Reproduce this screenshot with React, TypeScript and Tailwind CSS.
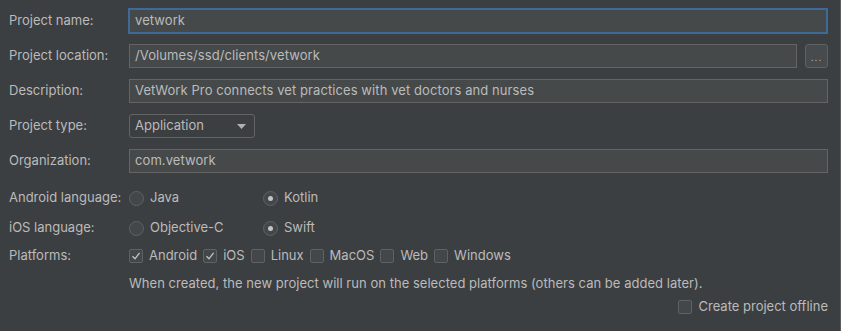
import React from 'react';

const font = { fontFamily: 'Inter, "Noto Sans", sans-serif' };

function Label({ children }: { children: React.ReactNode }) {
  return <div className="w-[120px] shrink-0 text-[13px] text-[#bbbbbb]">{children}</div>;
}

function Field({ value, focused }: { value: string; focused?: boolean }) {
  return (
    <div
      className={`flex flex-1 items-center bg-[#45494a] px-[5px] text-[13px] tracking-[0.08px] text-[#bbbbbb] ${
        focused ? 'h-[26px] border-2 border-[#3d6a97] -ml-[1px]' : 'h-[24px] border border-[#646464]'
      }`}
    >
      {value}
    </div>
  );
}

function Radio({ checked, label, width }: { checked?: boolean; label: string; width: string }) {
  return (
    <div className={`flex items-center ${width}`}>
      <span className="flex h-[15px] w-[15px] items-center justify-center rounded-full border border-[#5f6264] bg-[#43474a]">
        {checked && <span className="h-[5px] w-[5px] rounded-full bg-[#c4c4c4]" />}
      </span>
      <span className="ml-[6px] text-[13px] text-[#bbbbbb]">{label}</span>
    </div>
  );
}

function Check({ checked, label, last }: { checked?: boolean; label: string; last?: boolean }) {
  return (
    <div className={`flex items-center ${last ? '' : 'mr-[6px]'}`}>
      <span className="flex h-[14px] w-[14px] items-center justify-center rounded-[2px] border border-[#5f6264] bg-[#43474a]">
        {checked && (
          <svg width="10" height="10" viewBox="0 0 10 10">
            <path d="M1.5 5.2 L4 7.8 L8.6 1.8" fill="none" stroke="#c4c4c4" strokeWidth="1.3" />
          </svg>
        )}
      </span>
      <span className="ml-[6px] text-[13px] text-[#bbbbbb]">{label}</span>
    </div>
  );
}

export default function App() {
  return (
    <div className="h-[331px] w-[841px] border-r border-[#5b5e60] bg-[#3c3f41] pl-[9px] pr-[12px] pt-[8px]" style={font}>
      <div className="flex h-[26px] items-center">
        <Label>Project name:</Label>
        <Field value="vetwork" focused />
      </div>

      <div className="mt-[10px] flex h-[24px] items-center">
        <Label>Project location:</Label>
        <Field value="/Volumes/ssd/clients/vetwork" />
        <button className="ml-[8px] flex h-[24px] w-[23px] items-end justify-center rounded-[3px] border border-[#5e6163] bg-[#474b4d] pb-[5px] text-[10px] leading-none tracking-[1px] text-[#bbbbbb]">
          ...
        </button>
      </div>

      <div className="mt-[11px] flex h-[24px] items-center">
        <Label>Description:</Label>
        <Field value="VetWork Pro connects vet practices with vet doctors and nurses" />
      </div>

      <div className="mt-[11px] flex h-[24px] items-center">
        <Label>Project type:</Label>
        <div className="flex h-[24px] w-[126px] items-center justify-between rounded-[3px] border border-[#646464] bg-[#3c3f41] pl-[5px] pr-[8px] text-[13px] text-[#bbbbbb]">
          <span>Application</span>
          <svg width="9" height="5" viewBox="0 0 9 5">
            <path d="M0 0 H9 L4.5 5 Z" fill="#afb1b3" />
          </svg>
        </div>
      </div>

      <div className="mt-[11px] flex h-[24px] items-center">
        <Label>Organization:</Label>
        <Field value="com.vetwork" />
      </div>

      <div className="mt-[13px] flex h-[24px] items-center">
        <Label>Android language:</Label>
        <Radio label="Java" width="w-[134px]" />
        <Radio label="Kotlin" checked width="w-[80px]" />
      </div>

      <div className="mt-[6px] flex h-[24px] items-center">
        <Label>iOS language:</Label>
        <Radio label="Objective-C" width="w-[134px]" />
        <Radio label="Swift" checked width="w-[80px]" />
      </div>

      <div className="mt-[4px] flex h-[24px] items-center">
        <Label>Platforms:</Label>
        <Check label="Android" checked />
        <Check label="iOS" checked />
        <Check label="Linux" />
        <Check label="MacOS" />
        <Check label="Web" />
        <Check label="Windows" />
      </div>

      <div className="mt-[5px] flex h-[22px] items-center">
        <Label>{''}</Label>
        <span className="text-[13px] tracking-[0.03px] text-[#bbbbbb]">
          When created, the new project will run on the selected platforms (others can be added later).
        </span>
      </div>

      <div className="mt-[1px] flex h-[22px] items-center justify-end">
        <Check label="Create project offline" last />
      </div>
    </div>
  );
}
